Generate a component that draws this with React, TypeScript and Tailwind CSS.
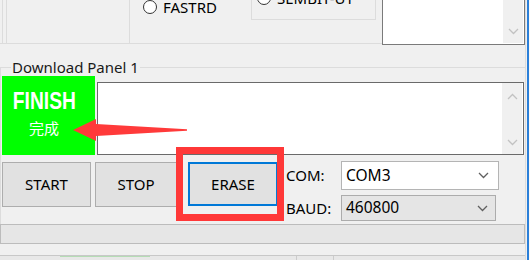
import React from 'react';

const font = "font-['Noto_Sans','Noto_Sans_CJK_SC',sans-serif]";

function Chevron({ up = false, className = '' }: { up?: boolean; className?: string }) {
  return (
    <svg width="11" height="7" viewBox="0 0 11 7" className={className}>
      <path
        d={up ? 'M1 6 L5.5 1.5 L10 6' : 'M1 1 L5.5 5.5 L10 1'}
        fill="none"
        stroke="currentColor"
        strokeWidth="1.3"
      />
    </svg>
  );
}

function Radio({ label }: { label: string }) {
  return (
    <div className="flex items-start gap-[6px]">
      <div className="w-[14px] h-[14px] rounded-full border border-[#333] bg-white" />
      <span className="text-[15px] leading-[15px] text-black">{label}</span>
    </div>
  );
}

function Button({ label, focused = false, w }: { label: string; focused?: boolean; w: string }) {
  return (
    <div
      className={`${w} flex items-center justify-center bg-[#e1e1e1] text-[15px] text-black ${
        focused ? 'h-[44px] border-2 border-[#0078d7]' : 'h-[45px] border border-[#adadad]'
      }`}
    >
      {label}
    </div>
  );
}

export default function App() {
  return (
    <div className={`w-[530px] h-[260px] bg-[#f0f0f0] flex overflow-hidden relative ${font}`}>
      <div className="w-[526px] flex flex-col border-r border-[#dcdcdc]">
        {/* top options area */}
        <div className="h-[45px] flex shrink-0">
          <div className="w-[382px] h-[44px] flex border-b border-[#dcdcdc]">
            <div className="w-[2px]" />
            <div className="w-[4px] border-l border-[#dcdcdc]" />
            <div className="w-[124px] border-l border-r border-[#dcdcdc]" />
            <div className="flex-1 flex justify-between pl-[13px] pr-[6px]">
              <Radio label="FASTRD" />
              <div className="w-[125px] h-[20px] border-l border-r border-b border-[#dcdcdc] pl-[5px] overflow-hidden">
                <div className="-mt-[9px]">
                  <Radio label="SEMBIT-UT" />
                </div>
              </div>
            </div>
          </div>
          <div className="w-[143px] h-[45px] bg-white border border-t-0 border-[#7a7a7a] flex justify-end pr-[1px] pb-[1px]">
            <div className="w-[20px] h-full bg-[#f0f0f0] flex flex-col justify-end items-center pb-[8px] text-[#c2c2c2]">
              <Chevron />
            </div>
          </div>
        </div>

        {/* Download Panel group */}
        <div className="mt-[22px] border-t border-l border-[#dcdcdc] flex flex-col pb-[3px]">
          <span className="-mt-[9px] ml-[10px] px-[1px] w-fit bg-[#f0f0f0] text-[15px] leading-[17px] text-[#1a1a1a]">
            Download Panel 1
          </span>
          <div className="flex items-start">
            <div className="ml-[1px] w-[93px] h-[79px] bg-[#00ff00] flex flex-col items-center pr-[9px] pt-[13px] text-white">
              <span className="inline-block scale-x-[0.8] font-['Liberation_Sans',sans-serif] font-bold text-[24px] leading-[24px]">
                FINISH
              </span>
              <span className="mt-[7px] font-['Noto_Sans_CJK_SC',sans-serif] text-[15px] leading-[15px]">完成</span>
            </div>
            <div className="ml-[2px] mt-[6px] w-[427px] h-[73px] bg-white border border-[#6a6a6a] flex justify-end pr-[1px]">
              <div className="w-[20px] h-full bg-[#f0f0f0] flex flex-col justify-between items-center pt-[10px] pb-[8px] text-[#c2c2c2]">
                <Chevron up />
                <Chevron />
              </div>
            </div>
          </div>

          <div className="mt-[7px] flex items-start pl-[1px]">
            <Button label="START" w="w-[89px]" />
            <div className="ml-[4px]">
              <Button label="STOP" w="w-[82px]" />
            </div>
            <div className="ml-[11px]">
              <Button label="ERASE" w="w-[90px]" focused />
            </div>
            <div className="ml-[8px] -mt-[1px] flex flex-col text-[15px] text-black">
              <div className="flex items-center h-[29px]">
                <span className="w-[55px]">COM:</span>
                <div className="w-[158px] h-[29px] bg-white border border-[#b4b4b4] flex items-center justify-between pl-[4px] pr-[9px]">
                  <span className="text-[15.5px]">COM3</span>
                  <Chevron className="text-[#606060]" />
                </div>
              </div>
              <div className="flex items-center h-[26px] mt-[5px]">
                <span className="w-[55px]">BAUD:</span>
                <div className="w-[155px] h-[26px] bg-[#e5e5e5] border border-[#acacac] flex items-center justify-between pl-[4px] pr-[7px]">
                  <span className="text-[15.5px]">460800</span>
                  <Chevron className="text-[#606060]" />
                </div>
              </div>
            </div>
          </div>
        </div>

        {/* progress bar */}
        <div className="h-[20px] border border-[#bcbcbc] bg-[#e6e6e6]" />

        <div className="h-[11px]" />
        <div className="flex-1 border-t border-[#c8c8c8] bg-[#e8e8e8] flex">
          <div className="ml-[60px] w-[90px] h-[1px] bg-[#b5dcb5]" />
          <div className="ml-[146px] w-[1px] h-full bg-[#cccccc]" />
          <div className="ml-[36px] w-[1px] h-full bg-[#cccccc]" />
        </div>
      </div>
      <div className="w-[1px]" />
      <div className="w-[2px] bg-[#2b7fd8]" />
      <div className="flex-1 bg-[#f8f8f8]" />

      {/* annotation overlays */}
      <svg
        className="absolute left-[73px] top-[119px]"
        width="115"
        height="22"
        viewBox="0 0 115 22"
      >
        <path d="M0 11 L23 0 L23 5 L114 10.3 L114 11.8 L23 17 L23 22 Z" fill="#ff3a3a" />
      </svg>
      <div className="absolute left-[176px] top-[147px] w-[108px] h-[74px] border-[7px] border-[#ff3838]" />
    </div>
  );
}
